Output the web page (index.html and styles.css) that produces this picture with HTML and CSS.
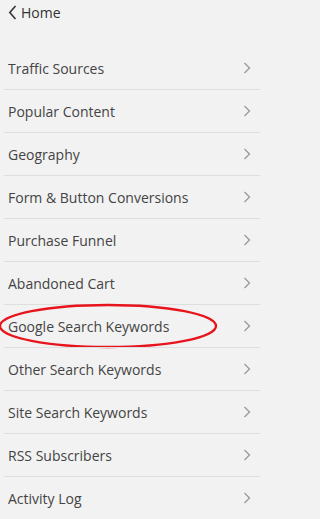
FILE: index.html
```html
<!DOCTYPE html>
<html>
<head>
<meta charset="utf-8">
<link rel="stylesheet" href="styles.css">
</head>
<body>
<header class="top">
  <a class="back" href="#">
    <svg class="back-icon" width="9" height="15" viewBox="0 0 9 15"><path d="M7.5 1 L1.8 7.5 L7.5 14" fill="none" stroke="#333" stroke-width="1.6"/></svg>
    <span>Home</span>
  </a>
</header>
<ul class="menu">
  <li class="item"><span>Traffic Sources</span><svg class="chev" width="8" height="12" viewBox="0 0 8 12"><path d="M1.5 1 L6.5 6 L1.5 11" fill="none" stroke="#999" stroke-width="1.3"/></svg></li>
  <li class="item"><span>Popular Content</span><svg class="chev" width="8" height="12" viewBox="0 0 8 12"><path d="M1.5 1 L6.5 6 L1.5 11" fill="none" stroke="#999" stroke-width="1.3"/></svg></li>
  <li class="item"><span>Geography</span><svg class="chev" width="8" height="12" viewBox="0 0 8 12"><path d="M1.5 1 L6.5 6 L1.5 11" fill="none" stroke="#999" stroke-width="1.3"/></svg></li>
  <li class="item"><span>Form &amp; Button Conversions</span><svg class="chev" width="8" height="12" viewBox="0 0 8 12"><path d="M1.5 1 L6.5 6 L1.5 11" fill="none" stroke="#999" stroke-width="1.3"/></svg></li>
  <li class="item"><span>Purchase Funnel</span><svg class="chev" width="8" height="12" viewBox="0 0 8 12"><path d="M1.5 1 L6.5 6 L1.5 11" fill="none" stroke="#999" stroke-width="1.3"/></svg></li>
  <li class="item"><span>Abandoned Cart</span><svg class="chev" width="8" height="12" viewBox="0 0 8 12"><path d="M1.5 1 L6.5 6 L1.5 11" fill="none" stroke="#999" stroke-width="1.3"/></svg></li>
  <li class="item highlighted"><span>Google Search Keywords</span><svg class="chev" width="8" height="12" viewBox="0 0 8 12"><path d="M1.5 1 L6.5 6 L1.5 11" fill="none" stroke="#999" stroke-width="1.3"/></svg>
    <svg class="circle" width="222" height="48" viewBox="0 0 222 48"><ellipse cx="111" cy="24" rx="108" ry="21" fill="none" stroke="#e8141c" stroke-width="2.4"/></svg>
  </li>
  <li class="item"><span>Other Search Keywords</span><svg class="chev" width="8" height="12" viewBox="0 0 8 12"><path d="M1.5 1 L6.5 6 L1.5 11" fill="none" stroke="#999" stroke-width="1.3"/></svg></li>
  <li class="item"><span>Site Search Keywords</span><svg class="chev" width="8" height="12" viewBox="0 0 8 12"><path d="M1.5 1 L6.5 6 L1.5 11" fill="none" stroke="#999" stroke-width="1.3"/></svg></li>
  <li class="item"><span>RSS Subscribers</span><svg class="chev" width="8" height="12" viewBox="0 0 8 12"><path d="M1.5 1 L6.5 6 L1.5 11" fill="none" stroke="#999" stroke-width="1.3"/></svg></li>
  <li class="item"><span>Activity Log</span><svg class="chev" width="8" height="12" viewBox="0 0 8 12"><path d="M1.5 1 L6.5 6 L1.5 11" fill="none" stroke="#999" stroke-width="1.3"/></svg></li>
</ul>
</body>
</html>
```
FILE: styles.css
```css
html, body {
  margin: 0;
  padding: 0;
  background: #f2f2f2;
  overflow: hidden;
}
body {
  font-family: "Open Sans", "Liberation Sans", sans-serif;
  color: #444;
  font-size: 14px;
}
.top {
  height: 47px;
  padding: 4px 0 0 8px;
  box-sizing: border-box;
}
.back {
  display: flex;
  align-items: center;
  gap: 4px;
  color: #333;
  text-decoration: none;
  font-size: 14px;
  height: 16px;
}
.back-icon {
  display: block;
}
.menu {
  list-style: none;
  margin: 0 0 0 4px;
  padding: 0;
  width: 256px;
}
.item {
  position: relative;
  display: flex;
  align-items: center;
  justify-content: space-between;
  height: 43px;
  box-sizing: border-box;
  padding: 0 9px 0 4px;
  border-top: 1px solid #dedede;
}
.item:first-child {
  border-top: none;
  height: 42px;
}
.chev {
  display: block;
}
.circle {
  position: absolute;
  left: -7px;
  top: -3px;
}
```
